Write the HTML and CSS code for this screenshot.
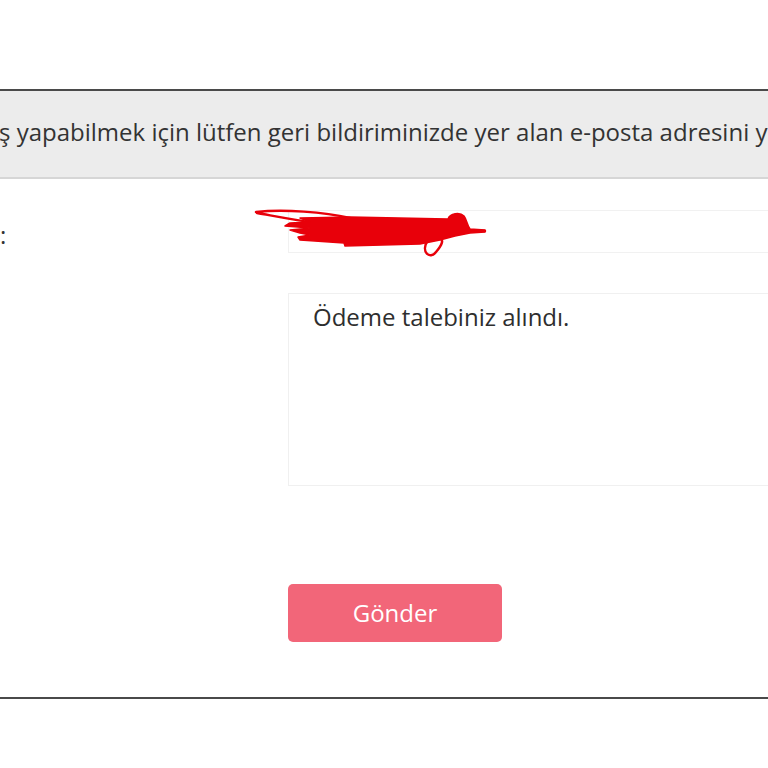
FILE: index.html
```html
<!DOCTYPE html>
<html lang="tr">
<head>
<meta charset="utf-8">
<link rel="stylesheet" href="styles.css">
</head>
<body>
<div class="panel">
  <div class="notice"><span class="notice-text">ş yapabilmek için lütfen geri bildiriminizde yer alan e-posta adresini yazınız.</span></div>
  <form class="form">
    <div class="row">
      <div class="label">:</div>
      <div class="field">
        <div class="input"></div>
        <svg class="scribble" width="240" height="56" viewBox="0 0 240 56">
          <g fill="none" stroke="#e8000a" stroke-linecap="round" stroke-linejoin="round">
            <path d="M2 4 C 30 1, 70 4, 96 10 M 3 5 C 20 8, 40 12, 62 15" stroke-width="2.5"/>
            <path d="M174 32 C 166 44, 176 52, 182 44 C 188 37, 190 32, 186 30" stroke-width="2.5"/>
            <path d="M210 22 L 231 23" stroke-width="2.5"/>
          </g>
          <path d="M46 10 L 96 9 L 194 11 C 196 5, 206 4, 210 8 C 213 12, 213 17, 216 21 L 231 22 L 231 24 L 216 25 L 201 28 L 186 32 L 166 36 L 91 38 L 90 35 L 46 32 L 44 29 L 56 27 L 46 25 L 36 22 L 56 20 L 31 18 L 36 15 L 56 14 Z" fill="#e8000a" stroke="#e8000a" stroke-width="1.5" stroke-linejoin="round"/>
        </svg>
      </div>
    </div>
    <div class="row">
      <div class="label"></div>
      <div class="field">
        <div class="textarea">Ödeme talebiniz alındı.</div>
      </div>
    </div>
    <div class="row">
      <div class="label"></div>
      <div class="field">
        <button type="button" class="btn">Gönder</button>
      </div>
    </div>
  </form>
</div>
</body>
</html>
```
FILE: styles.css
```css
html, body {
  margin: 0;
  padding: 0;
  background: #ffffff;
  width: 768px;
  height: 768px;
  overflow: hidden;
  font-family: "Open Sans", Lato, "Liberation Sans", sans-serif;
  color: #333333;
}
.panel {
  margin-top: 89px;
  border-top: 2px solid #4a4a4a;
  border-bottom: 2px solid #4a4a4a;
  height: 606px;
}
.notice {
  background: #ececec;
  border-bottom: 2px solid #d6d6d6;
  height: 86px;
  display: flex;
  align-items: center;
  white-space: nowrap;
  overflow: hidden;
}
.notice-text {
  font-size: 24px;
  margin-left: -1px;
  padding-bottom: 6px;
}
.form {
  display: flex;
  flex-direction: column;
}
.row {
  display: flex;
}
.label {
  width: 288px;
  font-size: 24px;
  flex-shrink: 0;
}
.row:first-child {
  margin-top: 31px;
  height: 43px;
}
.row:first-child .label {
  padding-top: 8px;
}
.field {
  flex: 1;
  position: relative;
}
.input {
  height: 41px;
  border: 1px solid #f1f1f1;
  border-right: none;
  background: #fff;
}
.scribble {
  position: absolute;
  left: -34px;
  top: -2px;
}
.row:nth-child(2) {
  margin-top: 40px;
}
.textarea {
  height: 185px;
  border: 1px solid #f0f0f0;
  border-right: none;
  padding: 6px 0 0 24px;
  font-size: 24px;
  color: #2e2e2e;
}
.row:nth-child(3) {
  margin-top: 98px;
}
.btn {
  width: 214px;
  height: 58px;
  background: #f26679;
  border: none;
  border-radius: 5px;
  color: #ffffff;
  font-family: inherit;
  font-size: 24px;
  padding: 0;
  padding-bottom: 2px;
}
```
